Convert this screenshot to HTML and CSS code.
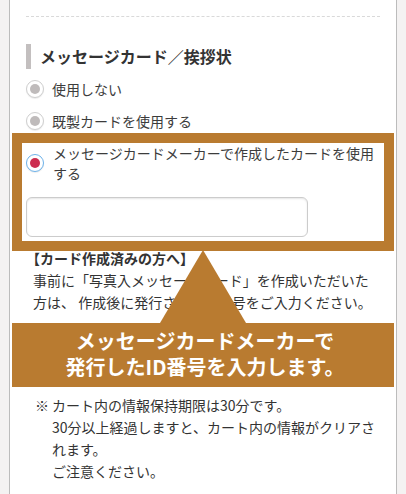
FILE: index.html
```html
<!DOCTYPE html>
<html lang="ja">
<head>
<meta charset="utf-8">
<link rel="stylesheet" href="styles.css">
</head>
<body>
<div class="panel">
  <div class="divider"></div>
  <h2 class="heading">メッセージカード／挨拶状</h2>
  <div class="options">
    <label class="option"><span class="radio"></span><span>使用しない</span></label>
    <label class="option"><span class="radio"></span><span>既製カードを使用する</span></label>
    <div class="highlight">
      <label class="option option-multi"><span class="radio checked"></span><span class="option-text">メッセージカードメーカーで作成したカードを使用する</span></label>
      <div class="input"></div>
    </div>
  </div>
  <div class="notice">
    <div class="notice-title">【カード作成済みの方へ】</div>
    <p class="notice-text">事前に「写真入メッセージカード」を作成いただいた方は、 作成後に発行されたID番号をご入力ください。</p>
  </div>
  <p class="note"><span class="mark">※</span>カート内の情報保持期限は30分です。<br>30分以上経過しますと、カート内の情報がクリアされます。<br>ご注意ください。</p>
</div>
<div class="callout">
  <div class="callout-arrow"></div>
  <div class="callout-box"><span class="callout-line">メッセージカードメーカーで</span><span class="callout-line">発行したID番号を入力します。</span></div>
</div>
</body>
</html>
```
FILE: styles.css
```css
html, body {
  margin: 0;
  padding: 0;
}
body {
  position: relative;
  background: #f4f2f2;
  font-family: "Noto Sans CJK JP", "Noto Sans", sans-serif;
  color: #333;
  font-size: 14px;
}
.panel {
  margin: 0 9px;
  background: #fff;
  border-left: 1px solid #bcbcbc;
  border-right: 1px solid #bcbcbc;
  padding: 16px 16px 12px;
}
.divider {
  border-top: 1px dashed #d9d9d9;
}
.heading {
  margin: 27px 0 0;
  border-left: 5px solid #c3bfbf;
  padding-left: 9px;
  font-size: 16px;
  font-weight: bold;
  line-height: 25px;
  color: #333;
}
.options {
  margin-top: 10px;
  display: flex;
  flex-direction: column;
}
.option {
  display: flex;
  align-items: center;
  gap: 8px;
  line-height: 20px;
  color: #3c3c3c;
  margin-bottom: 12px;
}
.radio {
  flex: none;
  width: 18px;
  height: 18px;
  box-sizing: border-box;
  border: 1px solid #cfcfcf;
  border-radius: 50%;
  background: #fff;
  display: flex;
  align-items: center;
  justify-content: center;
  box-shadow: 0 1px 1px rgba(0,0,0,0.08);
}
.radio::after {
  content: "";
  width: 10px;
  height: 10px;
  border-radius: 50%;
  background: #bfbbbb;
}
.radio.checked {
  border-color: #6db2ea;
}
.radio.checked::after {
  background: #cc2d4f;
}
.highlight {
  margin: -10px -14px 0;
  border: 10px solid #b97b30;
  padding: 0 4px 4px;
}
.option-multi {
  margin-bottom: 0;
  gap: 9px;
}
.option-text {
  flex: 1;
}
.input {
  margin-top: 14px;
  width: 282px;
  height: 40px;
  box-sizing: border-box;
  border: 1px solid #cccccc;
  border-radius: 6px;
  box-shadow: inset 0 1px 2px rgba(0,0,0,0.1);
}
.notice {
  margin-top: -4px;
  line-height: 22px;
}
.notice-title {
  font-weight: bold;
}
.notice-text {
  margin: 0;
  padding-left: 7px;
}
.note {
  margin: 81px 0 0;
  padding-left: 26px;
  text-indent: -17px;
  line-height: 22px;
}
.mark {
  display: inline-block;
  width: 17px;
  text-indent: 0;
}
.callout {
  position: absolute;
  left: 12px;
  top: 250px;
  width: 382px;
  display: flex;
  flex-direction: column;
  align-items: center;
}
.callout-arrow {
  width: 0;
  height: 0;
  border-left: 43.5px solid transparent;
  border-right: 43.5px solid transparent;
  border-bottom: 73px solid #b97b30;
  margin-right: 1px;
}
.callout-box {
  align-self: stretch;
  height: 64px;
  box-sizing: border-box;
  padding: 5px 0 0 4px;
  background: #b97b30;
  color: #fff;
  font-weight: bold;
  font-size: 20px;
  text-align: center;
  display: flex;
  flex-direction: column;
  align-items: center;
}
.callout-line {
  display: block;
  line-height: 26px;
  height: 26px;
}
```
